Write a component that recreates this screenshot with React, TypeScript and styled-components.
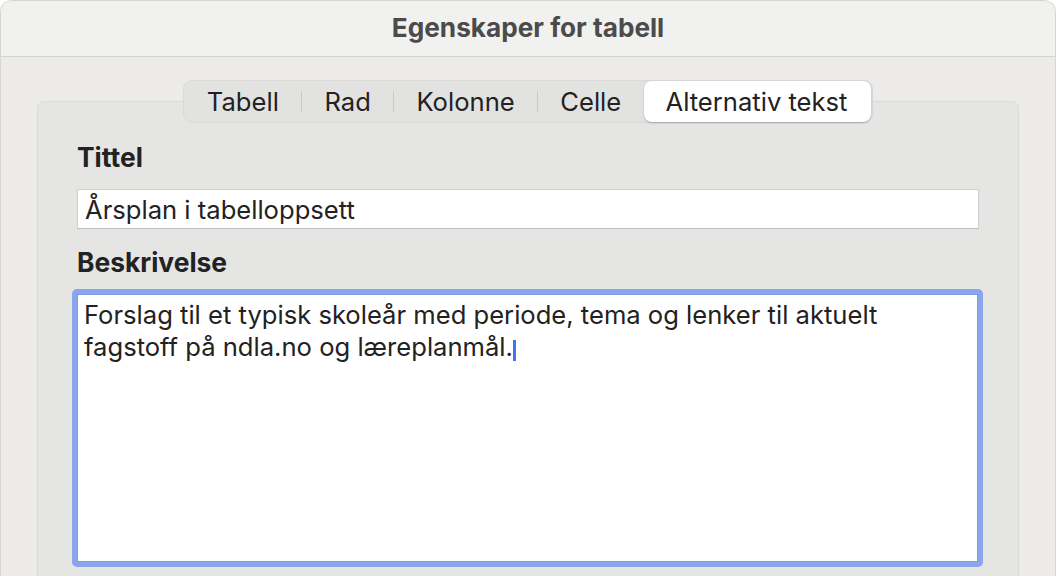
import React from "react";
import styled, { createGlobalStyle } from "styled-components";

const Global = createGlobalStyle`
  html, body { margin: 0; padding: 0; background: #ffffff; }
  body { font-family: Inter, "Noto Sans", sans-serif; -webkit-font-smoothing: antialiased; }
  * { box-sizing: border-box; }
`;

const Window = styled.div`
  width: 1056px;
  height: 576px;
  overflow: hidden;
  background: #ecebe9;
  border: 1px solid #d6d6d4;
  border-bottom: none;
  border-radius: 12px 12px 0 0;
  display: flex;
  flex-direction: column;
`;

const TitleBar = styled.div`
  height: 56px;
  flex: 0 0 56px;
  background: #f1f1f0;
  border-bottom: 1px solid #d4d4d2;
  display: flex;
  align-items: center;
  justify-content: center;
`;

const Title = styled.h1`
  margin: 0;
  font-size: 26.2px;
  font-weight: 700;
  color: #4b4b4b;
  line-height: 30px;
  margin-top: -2px;
`;

const Body = styled.div`
  flex: 1;
  padding: 23px 36px 0 36px;
`;

const TabsRow = styled.div`
  display: flex;
  justify-content: center;
  position: relative;
  z-index: 1;
`;

const Segmented = styled.div`
  display: flex;
  align-items: center;
  height: 43px;
  padding: 0 1px;
  background: #e2e2e1;
  border: 1px solid #d9d9d8;
  border-radius: 9px;
`;

const Tab = styled.div<{ $active?: boolean }>`
  height: 41px;
  display: flex;
  align-items: center;
  padding: ${(p) => (p.$active ? "0 24px 0 22px" : "0 22.3px")};
  font-size: 25.6px;
  color: #222222;
  border-radius: 8px;
  background: ${(p) => (p.$active ? "#ffffff" : "transparent")};
  box-shadow: ${(p) => (p.$active ? "0 1px 2px rgba(0,0,0,0.25)" : "none")};
`;

const Divider = styled.div`
  width: 1px;
  height: 21px;
  background: #cacaca;
`;

const Panel = styled.div`
  margin-top: -22px;
  height: 500px;
  background: #e5e5e4;
  border: 1px solid #dadad9;
  border-radius: 7px;
  padding: 40px 39px 0 39px;
  display: flex;
  flex-direction: column;
`;

const Label = styled.div`
  font-size: 26.4px;
  font-weight: 700;
  color: #222222;
  line-height: 30px;
`;

const TextInput = styled.div`
  margin-top: 17px;
  width: 902px;
  height: 40px;
  background: #ffffff;
  border: 1px solid #cfcfcf;
  border-bottom-color: #bdbdbd;
  display: flex;
  align-items: center;
  padding: 0 7px;
  font-size: 25.6px;
  color: #222222;
`;

const Spacer = styled.div<{ $h: number }>`
  height: ${(p) => p.$h}px;
`;

const TextArea = styled.div`
  margin-top: 12px;
  margin-left: -5px;
  width: 911px;
  height: 278px;
  border: 5px solid #8aa6ea;
  border-radius: 5px;
  background: #ffffff;
  box-shadow: inset 0 0 0 1px #7e9ae0;
  padding: 5px 8px 6px 7px;
  font-size: 25.6px;
  line-height: 32px;
  color: #222222;
`;

const Caret = styled.span`
  display: inline-block;
  width: 3px;
  height: 21px;
  background: #3a78f2;
  vertical-align: -5px;
  margin-left: 0px;
`;

export default function App() {
  return (
    <>
      <Global />
      <Window>
        <TitleBar>
          <Title>Egenskaper for tabell</Title>
        </TitleBar>
        <Body>
          <TabsRow>
            <Segmented>
              <Tab>Tabell</Tab>
              <Divider />
              <Tab>Rad</Tab>
              <Divider />
              <Tab>Kolonne</Tab>
              <Divider />
              <Tab>Celle</Tab>
              <Tab $active>Alternativ tekst</Tab>
            </Segmented>
          </TabsRow>
          <Panel>
            <Label>Tittel</Label>
            <TextInput>Årsplan i tabelloppsett</TextInput>
            <Spacer $h={18} />
            <Label>Beskrivelse</Label>
            <TextArea>
              Forslag til et typisk skoleår med periode, tema og lenker til aktuelt fagstoff på ndla.no og læreplanmål.
              <Caret />
            </TextArea>
          </Panel>
        </Body>
      </Window>
    </>
  );
}
